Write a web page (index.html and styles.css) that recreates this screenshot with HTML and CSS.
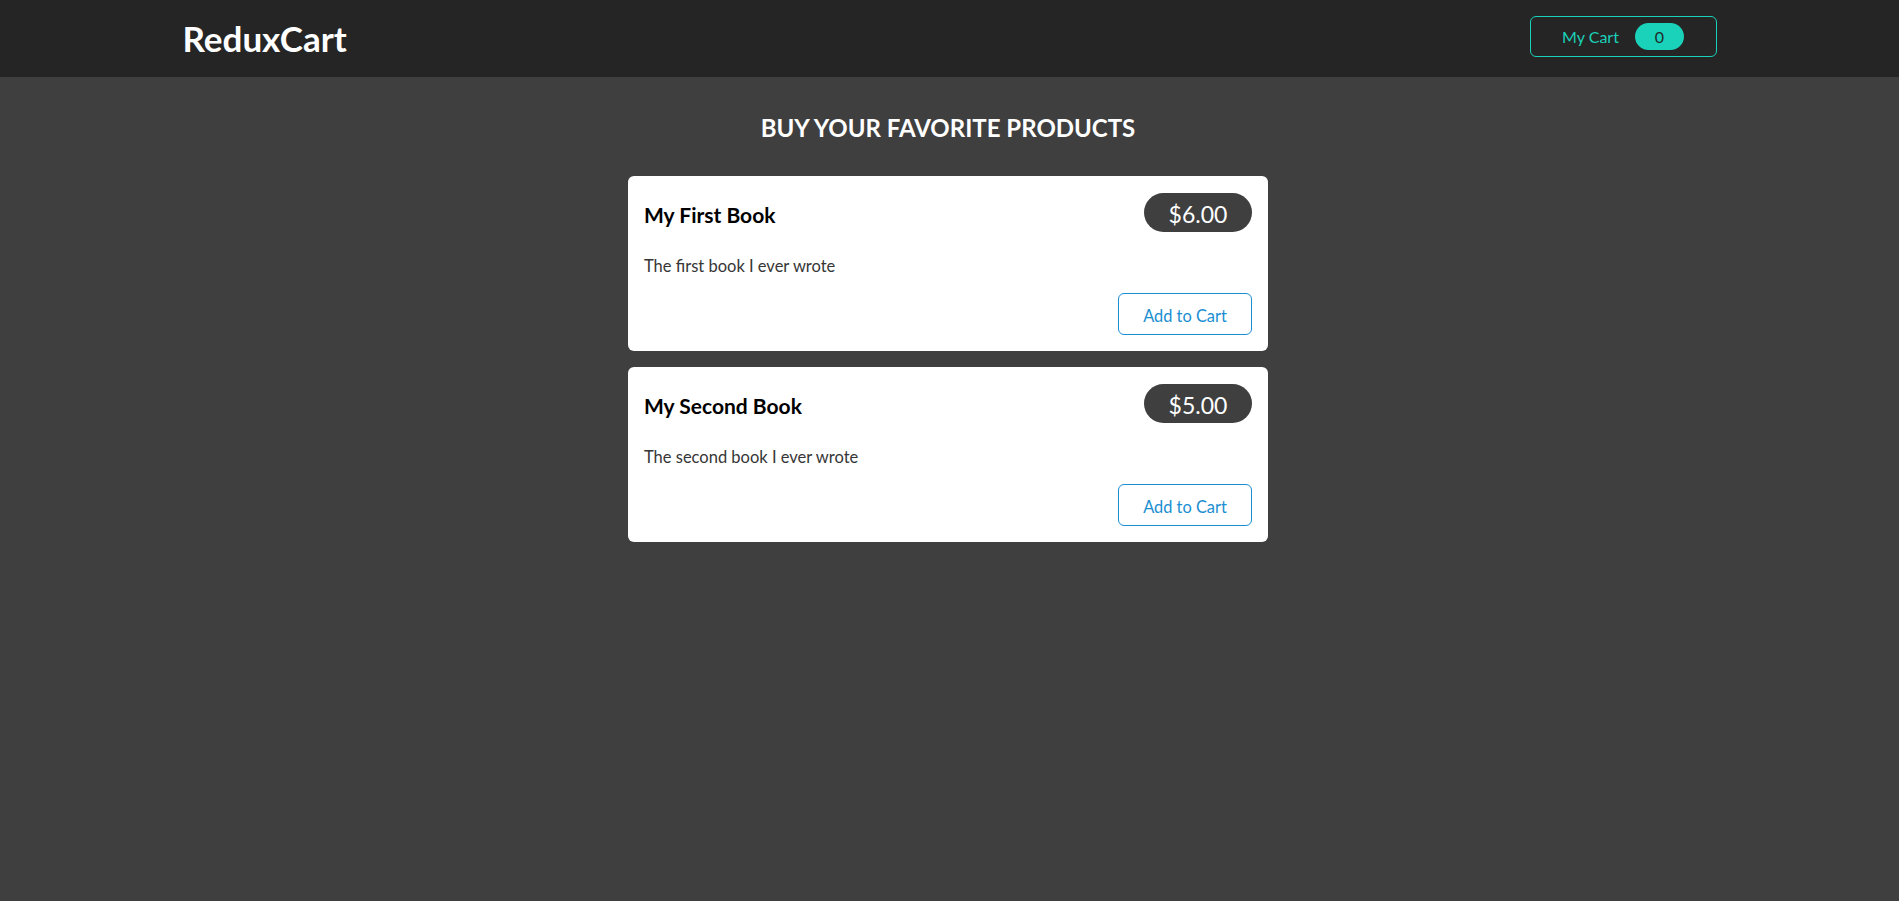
FILE: index.html
```html
<!DOCTYPE html>
<html lang="en">
<head>
<meta charset="utf-8">
<title>ReduxCart</title>
<link rel="stylesheet" href="styles.css">
</head>
<body>
<header class="header">
  <div class="header-inner">
    <h1 class="logo">ReduxCart</h1>
    <nav class="nav">
      <button class="cart-button">
        <span class="cart-label">My Cart</span>
        <span class="badge">0</span>
      </button>
    </nav>
  </div>
</header>
<main class="main">
  <section class="products">
    <h2 class="products-title">Buy your favorite products</h2>
    <ul class="product-list">
      <li class="card">
        <header class="card-head">
          <h3 class="card-title">My First Book</h3>
          <div class="price">$6.00</div>
        </header>
        <p class="desc">The first book I ever wrote</p>
        <div class="actions">
          <button class="add-btn">Add to Cart</button>
        </div>
      </li>
      <li class="card">
        <header class="card-head">
          <h3 class="card-title">My Second Book</h3>
          <div class="price">$5.00</div>
        </header>
        <p class="desc">The second book I ever wrote</p>
        <div class="actions">
          <button class="add-btn">Add to Cart</button>
        </div>
      </li>
    </ul>
  </section>
</main>
</body>
</html>
```
FILE: styles.css
```css
* { box-sizing: border-box; }
html, body { margin: 0; padding: 0; }
body {
  background: #3f3f3f;
  font-family: Lato, "Liberation Sans", sans-serif;
  min-height: 100vh;
}
.header {
  background: #252525;
  height: 77px;
}
.header-inner {
  width: 1534px;
  margin: 0 auto;
  height: 100%;
  display: flex;
  align-items: center;
  justify-content: space-between;
}
.logo {
  margin: 0;
  color: #fff;
  font-size: 35px;
  font-weight: 700;
  line-height: 1;
}
.nav {
  margin-bottom: 4px;
}
.cart-button {
  width: 187px;
  height: 41px;
  border: 1px solid #1ad1b9;
  border-radius: 6px;
  background: transparent;
  color: #1ad1b9;
  font-family: inherit;
  font-size: 16px;
  display: flex;
  align-items: center;
  justify-content: center;
  gap: 16px;
  padding: 0;
  white-space: nowrap;
}
.cart-label {
  white-space: nowrap;
}
.badge {
  background: #1ad1b9;
  color: #1f2b2a;
  border-radius: 14px;
  width: 49px;
  height: 27px;
  flex: none;
  display: flex;
  align-items: center;
  justify-content: center;
  font-size: 16px;
}
.main {
  display: flex;
  flex-direction: column;
  align-items: center;
  padding-right: 3px;
}
.products {
  width: 640px;
}
.products-title {
  margin: 35px 0 32px;
  color: #fff;
  text-align: center;
  text-transform: uppercase;
  font-size: 24px;
  font-weight: 700;
  line-height: 32px;
}
.product-list {
  list-style: none;
  margin: 0;
  padding: 0;
  display: flex;
  flex-direction: column;
  gap: 16px;
}
.card {
  background: #fff;
  border-radius: 6px;
  padding: 17px 16px 16px 16px;
  height: 175px;
}
.card-head {
  display: flex;
  justify-content: space-between;
  align-items: baseline;
}
.card-title {
  margin: 0;
  font-size: 21px;
  font-weight: 700;
  color: #000;
}
.price {
  background: #3f3f3f;
  color: #fff;
  border-radius: 20px;
  width: 108px;
  height: 39px;
  padding-top: 3px;
  line-height: 36px;
  text-align: center;
  font-size: 23px;
}
.desc {
  margin: 24px 0 17px;
  color: #363636;
  font-size: 16.5px;
  line-height: 20px;
}
.actions {
  display: flex;
  justify-content: flex-end;
}
.add-btn {
  width: 134px;
  height: 42px;
  border: 1px solid #1a8ed1;
  border-radius: 6px;
  background: #fff;
  color: #1a8ed1;
  font-family: inherit;
  font-size: 16.4px;
  padding: 3px 0 0;
}
```
